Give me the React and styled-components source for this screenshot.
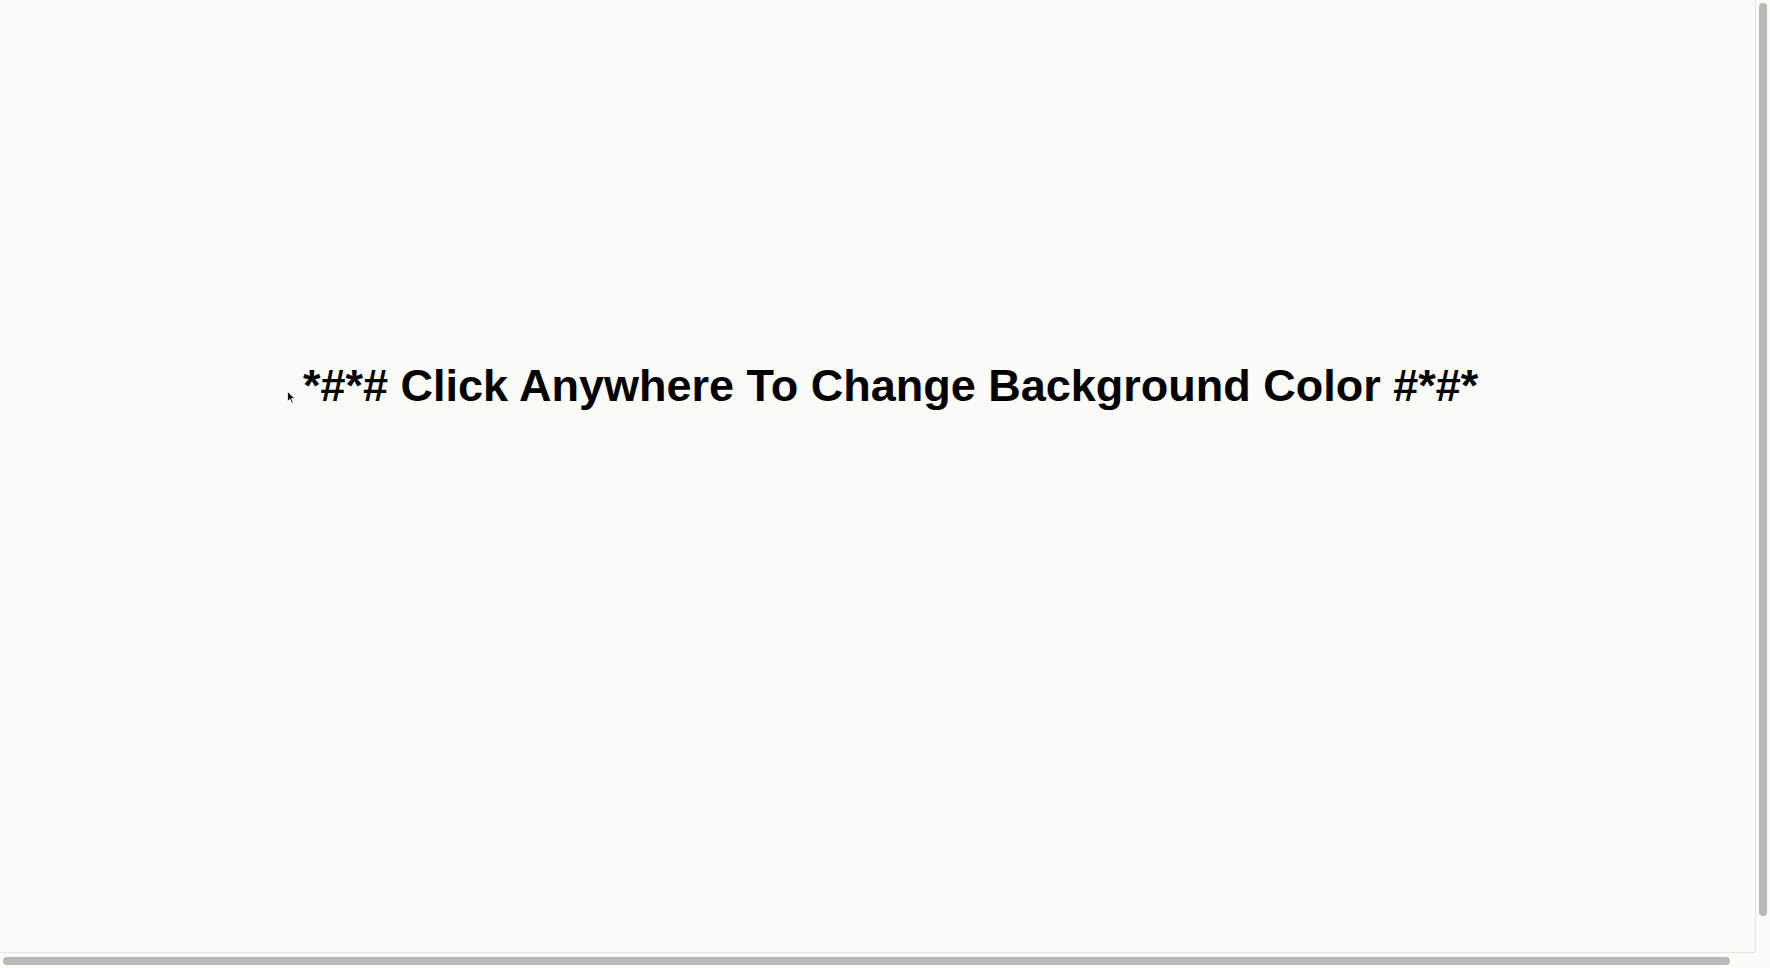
import React from 'react'
import styled, {createGlobalStyle} from 'styled-components'

const Global = createGlobalStyle`
html, body {
  margin: 0;
  padding: 0;
  overflow: hidden;
}
body {
  background: #fbfbf8;
  font-family: "Liberation Sans", Arial, Helvetica, sans-serif;
}
`

export default function App() {
  return (
    <Frame>
      <Global />
      <Stage>
        <Title>
          <Cursor viewBox="0 0 9 13" aria-hidden="true">
            <path d="M0.5 0.5 L0.5 10.5 L3 8.2 L4.8 12.3 L6.3 11.6 L4.6 7.6 L8 7.6 Z" fill="#111" stroke="#fff" strokeWidth="0.8"/>
          </Cursor>
          *#*# Click Anywhere To Change Background Color #*#*
        </Title>
      </Stage>
      <VTrack><VThumb /></VTrack>
      <HTrack><HThumb /></HTrack>
      <Corner />
    </Frame>
  )
}

const Frame = styled.div`
display: grid;
grid-template-columns: 1fr 15px;
grid-template-rows: 1fr 16px;
width: 100vw;
height: 100vh;
`;

const Stage = styled.main`
padding: 363px 0 0 303px;
`;

const Title = styled.h1`
position: relative;
margin: 0;
font-size: 45px;
line-height: 1;
font-weight: 700;
color: #000;
white-space: nowrap;
`;

const Cursor = styled.svg`
position: absolute;
left: -16px;
top: 28px;
width: 9px;
height: 13px;
`;

const VTrack = styled.div`
border-left: 1px solid #e4e4ee;
padding: 3px 3px 0 3px;
`;

const VThumb = styled.div`
width: 8px;
height: 913px;
border-radius: 4px;
background: #b9b9b9;
`;

const HTrack = styled.div`
border-top: 1px solid #e4e4ee;
padding: 4px 0 0 3px;
`;

const HThumb = styled.div`
width: 1727px;
height: 8px;
border-radius: 4px;
background: #b9b9b9;
`;

const Corner = styled.div`
background: #fbfbf8;
`;
